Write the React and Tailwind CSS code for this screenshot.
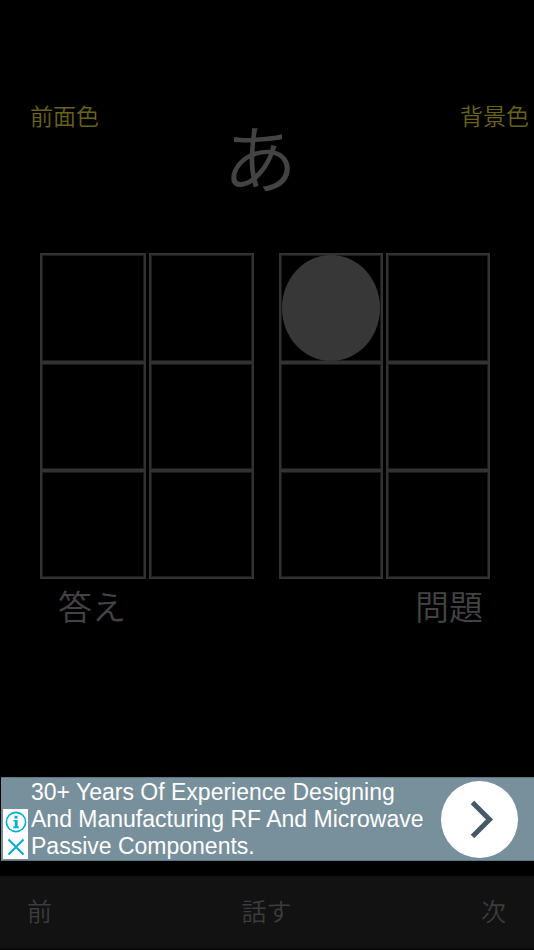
import React, { useState } from 'react';

// Dots are listed row by row, left column first
const CELLS = [
  { id: 'first', label: '1マス目', dots: [0, 0, 0, 0, 0, 0] },
  { id: 'second', label: '2マス目', dots: [1, 0, 0, 0, 0, 0] },
];

function BrailleCell({ label, dots }) {
  return (
    <div role="group" aria-label={label} className="grid grid-cols-2 grid-rows-3 gap-x-[3px] h-[326px]">
      {dots.map((filled, i) => (
        <div
          key={i}
          className={`border-x-2 border-t-2 border-[#323232] shadow-[inset_0_0_0_1px_#1a1a1a] px-px ${i < 4 ? 'border-b' : 'border-b-2'}`}
        >
          {filled ? <div className="w-full h-full rounded-[50%] bg-[#373737]" /> : null}
        </div>
      ))}
    </div>
  );
}

function AdBanner({ onClose }) {
  return (
    <div className="relative ml-px bg-[#78909c] border-y border-[#5d7683]">
      <a href="#ad" className="flex items-center justify-between gap-2 pl-[30px] pr-4 h-[82px] text-white">
        <span className="font-['Liberation_Sans',sans-serif] text-[23px] leading-[27px]">
          30+ Years Of Experience Designing And Manufacturing RF And Microwave Passive Components.
        </span>
        <span className="flex shrink-0 items-center justify-center w-[77px] h-[77px] rounded-full bg-white">
          <svg viewBox="0 0 77 77" className="w-full h-full" fill="none" stroke="#455a64" strokeWidth="5" aria-hidden="true">
            <path d="M31.5 21.5 48.5 38.5 31.5 55.5" />
          </svg>
        </span>
      </a>

      {/* AD CONTROLS */}
      <div className="absolute left-[2px] bottom-px flex flex-col w-[25px] bg-white">
        <button type="button" aria-label="Ad information" className="flex items-center justify-center h-[25px]">
          <svg viewBox="0 0 22 22" className="w-[22px] h-[22px]" fill="none" stroke="#00aecd" aria-hidden="true">
            <circle cx="11" cy="11" r="9.6" strokeWidth="1.6" />
            <path d="M11 4.8v2.8" strokeWidth="3" />
            <path d="M8.5 9.8H11M8.2 16.4h5.6" strokeWidth="1.6" />
            <path d="M11.2 9v7.5" strokeWidth="2.8" />
          </svg>
        </button>
        <button type="button" aria-label="Close ad" onClick={onClose} className="flex items-center justify-center h-[25px]">
          <svg viewBox="0 0 22 22" className="w-[22px] h-[22px]" fill="none" stroke="#00aecd" strokeWidth="2" aria-hidden="true">
            <path d="M3.5 3.5 18.5 18.5M18.5 3.5 3.5 18.5" />
          </svg>
        </button>
      </div>
    </div>
  );
}

export default function App() {
  const [showAd, setShowAd] = useState(true);

  return (
    <div className="flex flex-col min-h-screen bg-black text-[#434343] font-[350] font-['Noto_Sans_CJK_JP',sans-serif]">
      {/* COLOURS AND CURRENT CHARACTER */}
      <header className="grid grid-cols-[1fr_auto_1fr] items-start pt-[99px] text-[23px] leading-8 text-[#69621a]">
        <button type="button" className="justify-self-start ml-[30px]">前面色</button>
        <h1 className="pt-4 pr-3.5 text-[74px] leading-[80px] text-[#434343]">あ</h1>
        <button type="button" className="justify-self-end mr-[5px]">背景色</button>
      </header>

      <main>
        <div className="grid grid-cols-[214fr_211fr] gap-x-[25px] ml-10 mr-11 mt-[58px]">
          {CELLS.map((cell) => (
            <BrailleCell key={cell.id} label={cell.label} dots={cell.dots} />
          ))}
        </div>
        <div className="flex justify-between ml-[58px] mr-[51px] mt-[7px] text-[34px] leading-10">
          <button type="button">答え</button>
          <button type="button">問題</button>
        </div>
      </main>

      <footer className="mt-auto">
        {showAd && <AdBanner onClose={() => setShowAd(false)} />}
        <nav className="flex items-center justify-between h-[73px] mt-[15px] mb-px pb-1 pl-[27px] pr-7 bg-[#121212] text-[25px] text-[#3c3c3c]">
          <button type="button">前</button>
          <button type="button">話す</button>
          <button type="button">次</button>
        </nav>
      </footer>
    </div>
  );
}
